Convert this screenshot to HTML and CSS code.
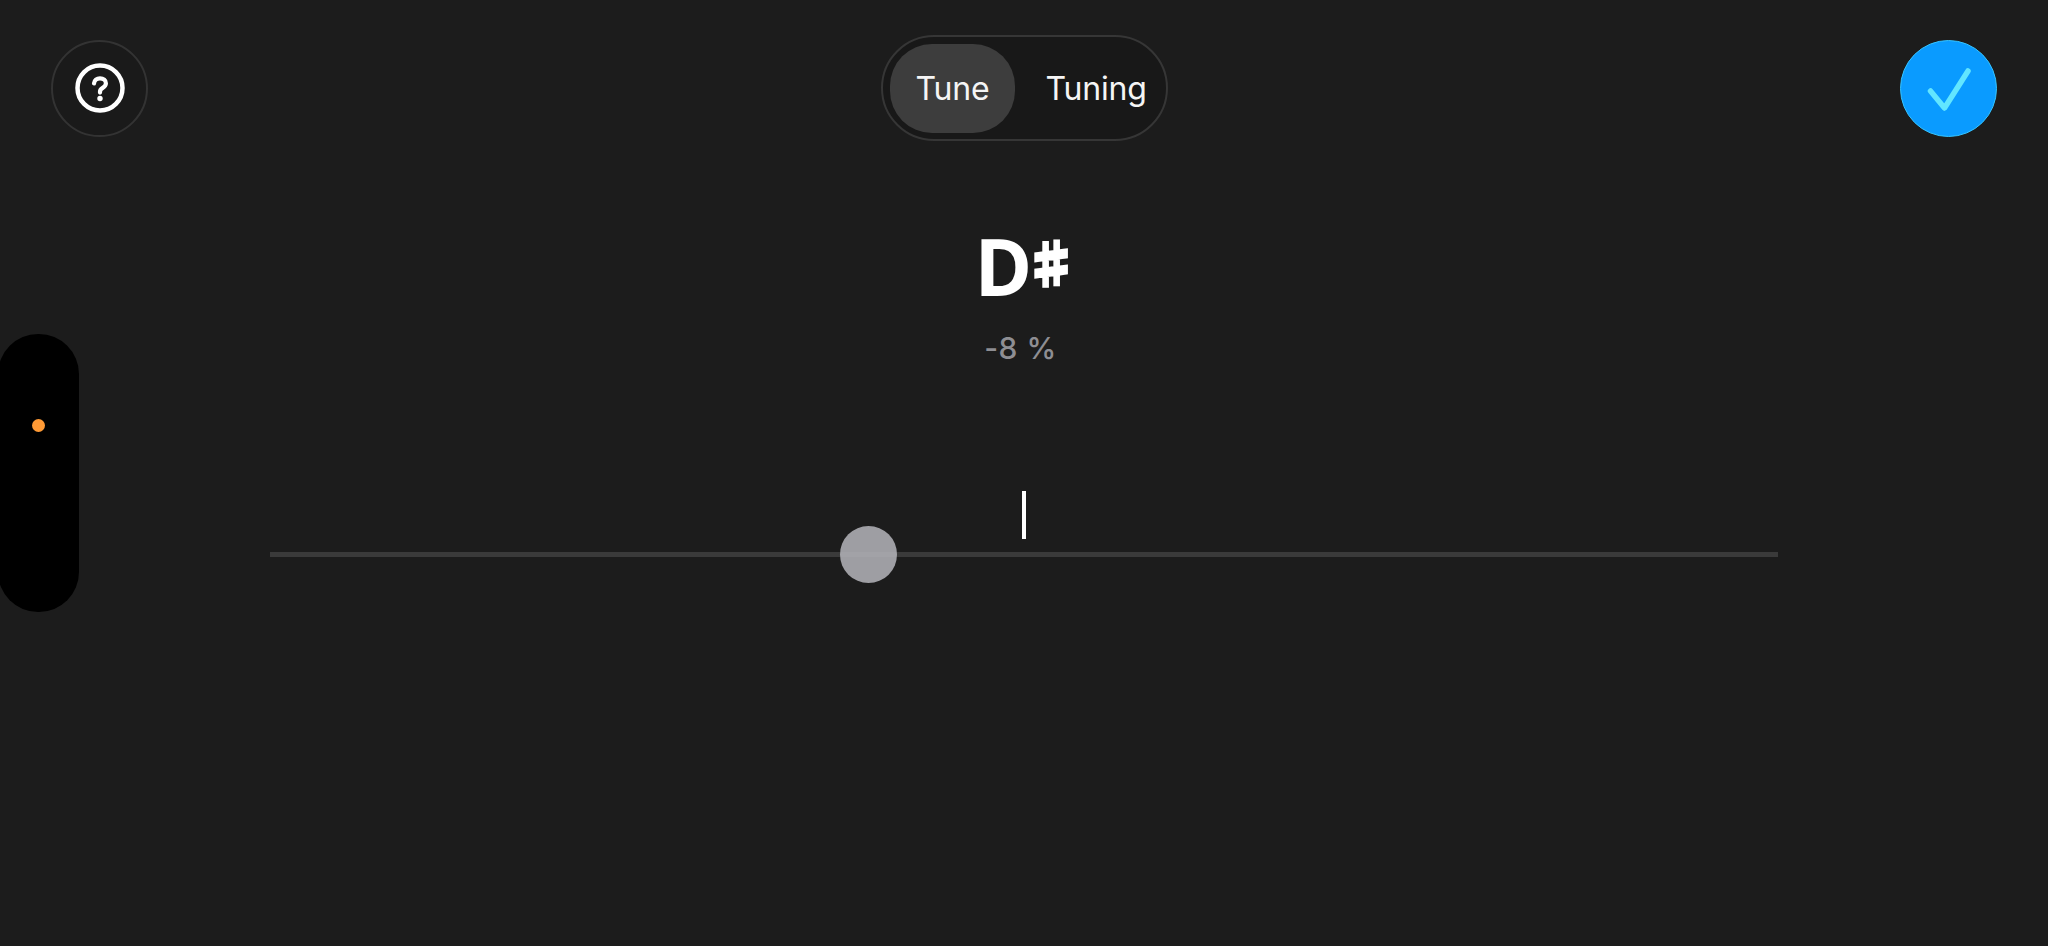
FILE: index.html
```html
<!DOCTYPE html>
<html lang="en">
<head>
    <meta charset="UTF-8">
    <meta name="viewport" content="width=device-width, initial-scale=1.0">
    <title>Tuner</title>
    <link rel="stylesheet" href="styles.css">
</head>
<body>

<div class="island"><span class="island-dot"></span></div>

<header class="topbar">
    <button class="round-btn help-btn" type="button" aria-label="Help">
        <svg width="52" height="52" viewBox="0 0 52 52" fill="none" stroke="#fff" stroke-linecap="round">
            <circle cx="26" cy="26" r="22.5" stroke-width="4.5"/>
            <path d="M20 21.500c.3-3.300 2.800-5.200 6-5.200 3.400 0 5.900 2 5.900 4.900 0 2.300-1.300 3.500-3.200 4.700-1.700 1.100-2.700 2-2.700 3.900v.8" stroke-width="4.200"/>
            <circle cx="26" cy="36.500" r="2.700" fill="#fff" stroke="none"/>
        </svg>
    </button>

    <div class="segmented">
        <span class="segment active">Tune</span>
        <span class="segment">Tuning</span>
    </div>

    <button class="round-btn check-btn" type="button" aria-label="Done">
        <svg width="96" height="96" viewBox="0 0 96 96" fill="none" stroke="#62e6ff" stroke-width="5.500" stroke-linecap="round" stroke-linejoin="round">
            <path d="M29.500 51 43.500 68 67 31"/>
        </svg>
    </button>
</header>

<main class="tuner">
    <div class="note">D<span class="sharp">♯</span></div>
    <div class="cents">-8 %</div>

    <div class="meter">
        <div class="needle"></div>
        <div class="track">
            <div class="thumb"></div>
        </div>
    </div>
</main>

</body>
</html>
```

FILE: styles.css
```css
* {
    box-sizing: border-box;
}
html, body {
    height: 100%;
}
body {
    margin: 0;
    overflow: hidden;
    background-color: #1c1c1c;
    color: #fff;
    font-family: Inter, "Liberation Sans", sans-serif;
}

/* black pill cut off by the left screen edge */
.island {
    position: absolute;
    left: -2px;
    top: 334px;
    width: 81px;
    height: 278px;
    border-radius: 40px;
    background-color: #000;
}
.island-dot {
    position: absolute;
    left: 34px;
    top: 85px;
    width: 13px;
    height: 13px;
    border-radius: 50%;
    background-color: #ff9a35;
}

.topbar {
    display: flex;
    justify-content: space-between;
    align-items: center;
    padding: 35px 51px 0;
}
.round-btn {
    display: flex;
    align-items: center;
    justify-content: center;
    flex: none;
    width: 97px;
    height: 97px;
    padding: 0;
    border-radius: 50%;
}
.help-btn {
    background-color: #1a1a1a;
    border: 2px solid #333;
}
.check-btn {
    background-color: #0a9bff;
    border: 1.5px solid #35c4ff;
}
.round-btn svg {
    flex: none;
}

.segmented {
    display: flex;
    align-items: center;
    width: 287px;
    height: 106px;
    padding: 0 7px;
    background-color: #181818;
    border: 2px solid #363636;
    border-radius: 53px;
}
.segment {
    font-size: 32px;
    line-height: 89px;
    letter-spacing: -0.2px;
    color: #f5f5f5;
    padding: 0 26px;
}
.segment.active {
    width: 126px;
    height: 89px;
    background-color: #3d3d3d;
    border-radius: 42px;
    margin-right: 4px;
}

.tuner {
    display: flex;
    flex-direction: column;
    align-items: center;
    padding-top: 80px;
}
.note {
    display: flex;
    align-items: flex-start;
    height: 96px;
    margin-left: 3px;
    font-family: "Open Sans", "Liberation Sans", sans-serif;
    font-size: 78px;
    line-height: 90px;
    font-weight: 700;
    letter-spacing: -10px;
}
.sharp {
    display: inline-block;
    font-family: "Noto Sans CJK JP", sans-serif;
    font-size: 49px;
    line-height: 80px;
    font-weight: 900;
    letter-spacing: 0;
    margin-left: 5px;
    -webkit-text-stroke: 3.5px #fff;
    transform: scaleX(1.2);
}
.cents {
    margin-top: 13px;
    margin-right: 7px;
    font-size: 30px;
    line-height: 36px;
    font-weight: 500;
    letter-spacing: 0.5px;
    color: #8e8e93;
}

.meter {
    display: flex;
    flex-direction: column;
    align-items: center;
    width: 1508px;
    margin-top: 125px;
}
.needle {
    width: 4px;
    height: 48px;
    background-color: #fff;
}
.track {
    position: relative;
    width: 100%;
    height: 5px;
    margin-top: 13px;
    background-color: #3a3a3a;
}
.thumb {
    position: absolute;
    left: 570px;
    top: -26px;
    width: 57px;
    height: 57px;
    border-radius: 50%;
    background-color: rgba(176, 176, 182, 0.88);
}
```
